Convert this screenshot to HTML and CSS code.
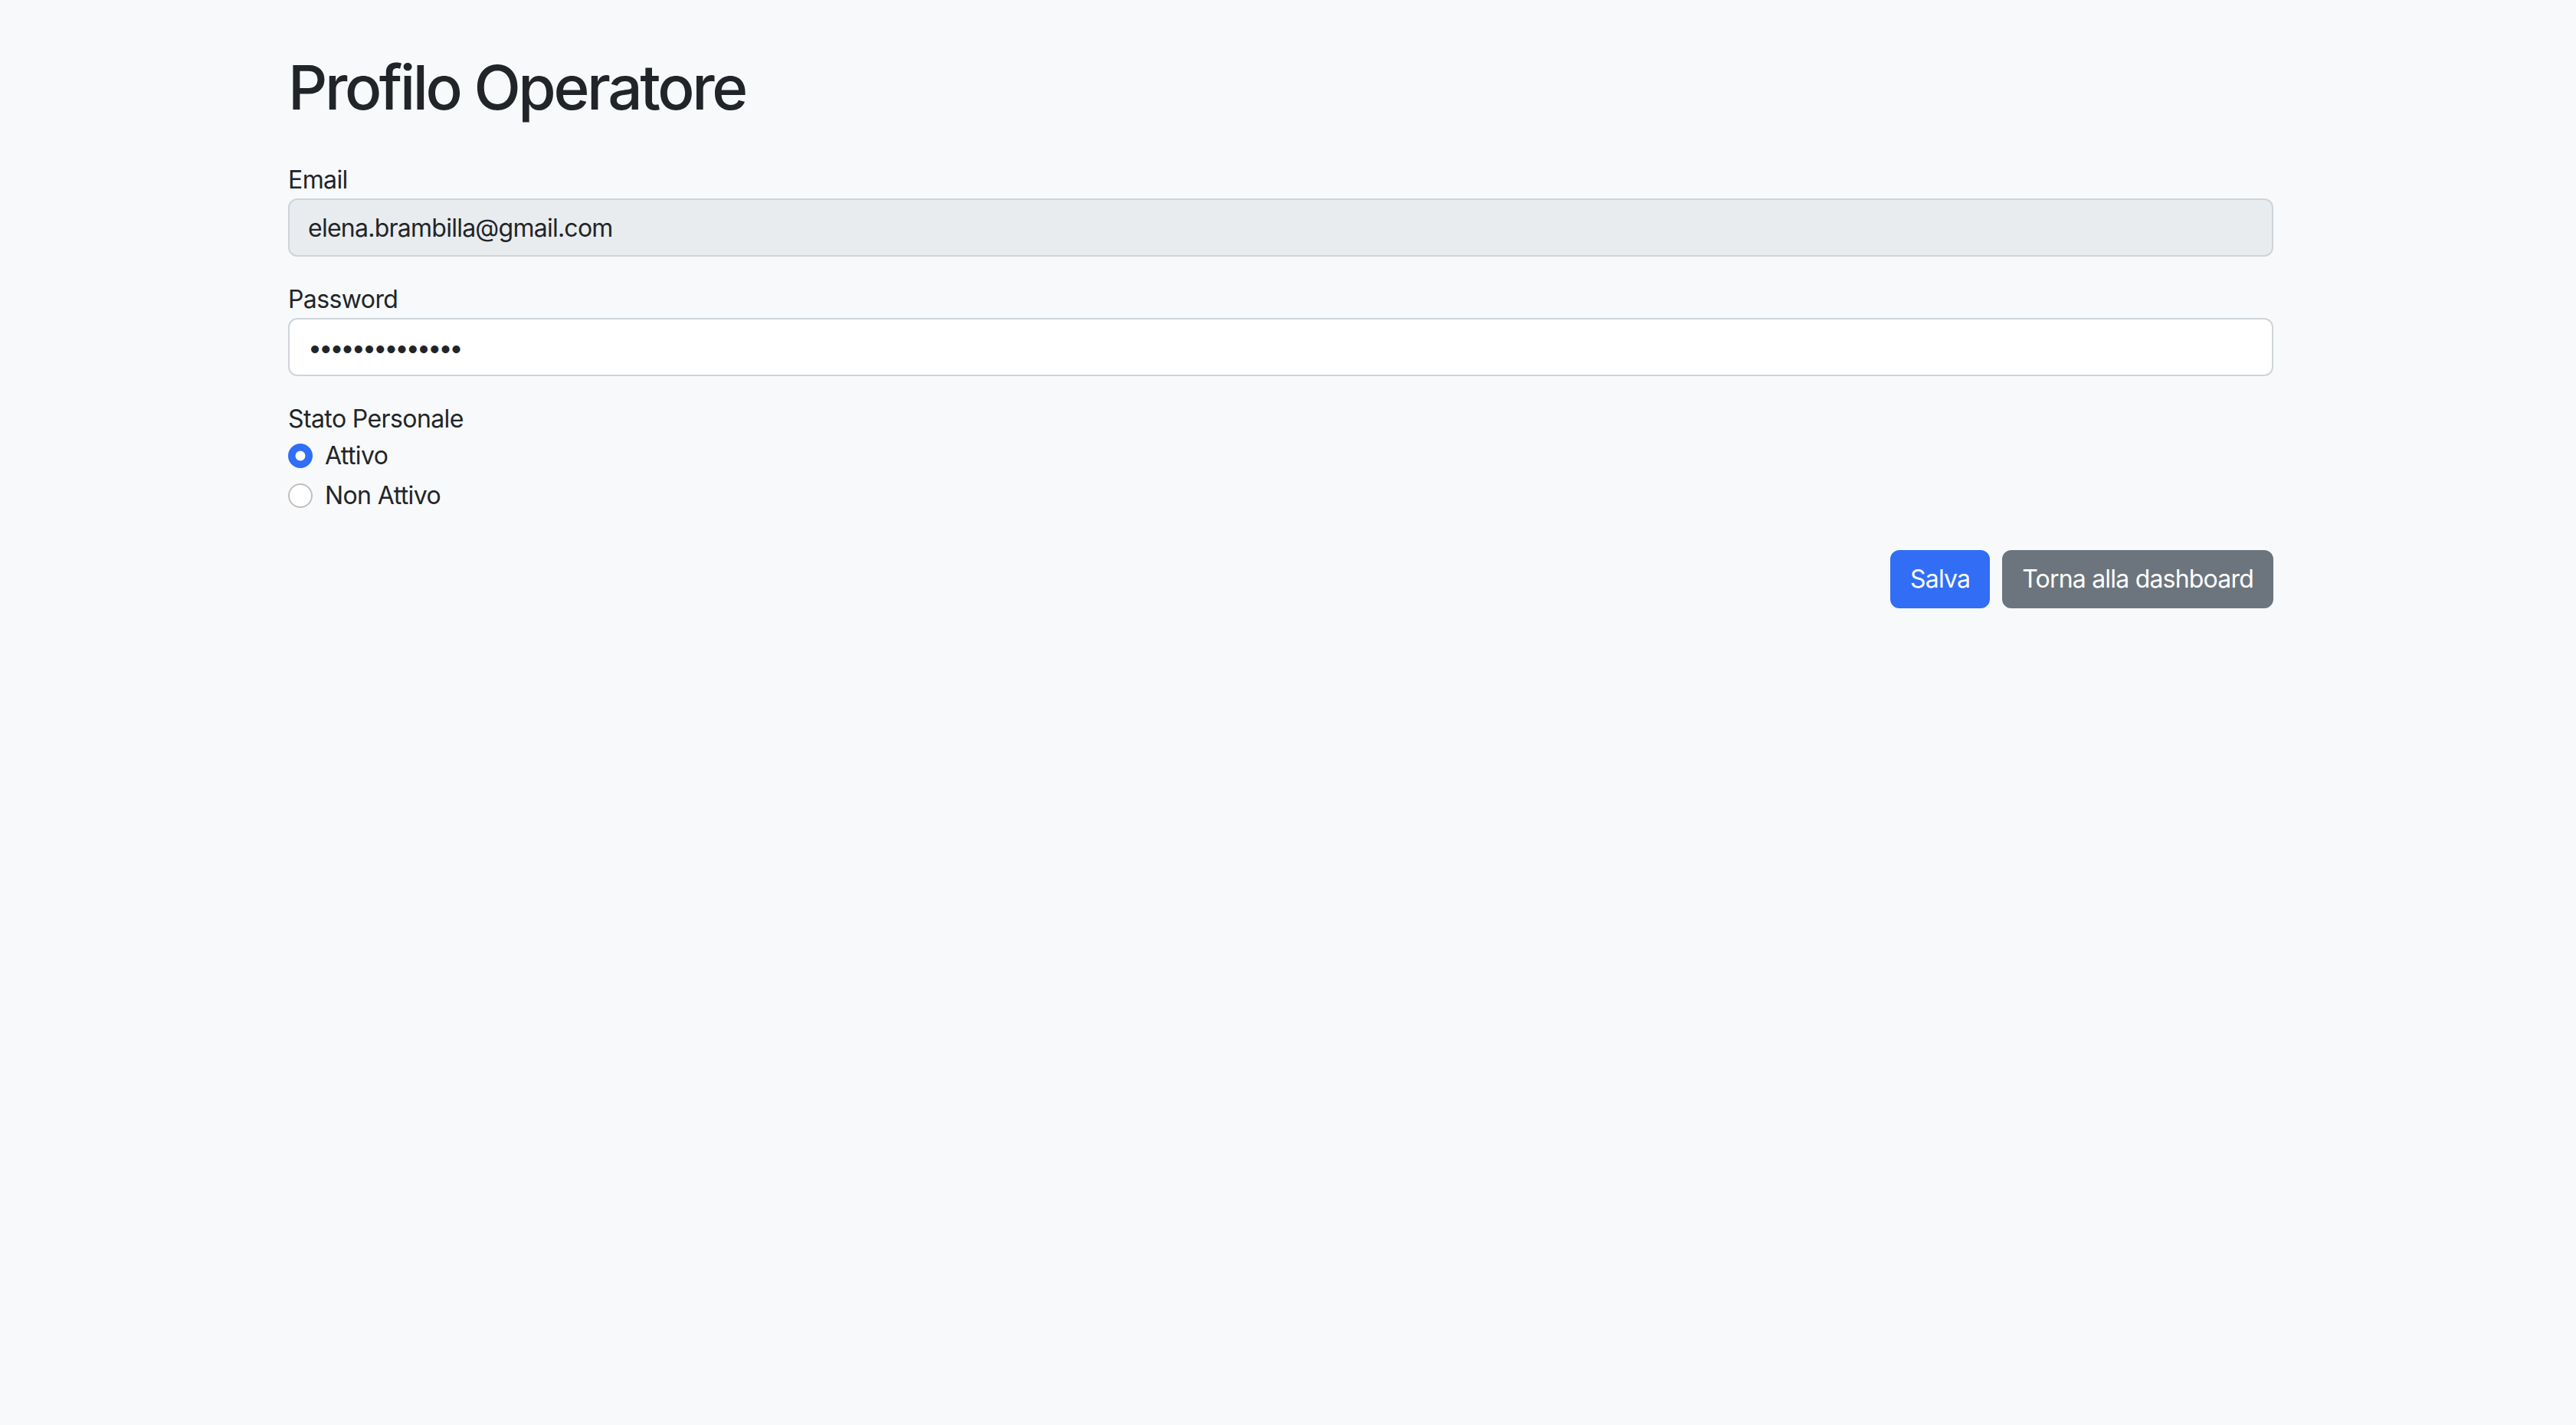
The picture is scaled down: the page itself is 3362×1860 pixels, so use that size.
FILE: index.html
```html
<!DOCTYPE html>
<html lang="it">
<head>
<meta charset="utf-8">
<title>Profilo Operatore</title>
<link rel="stylesheet" href="styles.css">
</head>
<body>
<main class="container">
  <h1 class="title">Profilo Operatore</h1>
  <form class="form">
    <div class="field">
      <label class="label" for="email">Email</label>
      <input class="control control-disabled" id="email" type="email" value="elena.brambilla@gmail.com" disabled>
    </div>
    <div class="field">
      <label class="label" for="password">Password</label>
      <input class="control control-password" id="password" type="password" value="elenabrambilla">
    </div>
    <div class="field field-radios">
      <div class="label">Stato Personale</div>
      <label class="check">
        <input class="radio" type="radio" name="stato" checked>
        <span>Attivo</span>
      </label>
      <label class="check">
        <input class="radio" type="radio" name="stato">
        <span>Non Attivo</span>
      </label>
    </div>
    <div class="actions">
      <button type="button" class="btn btn-primary">Salva</button>
      <button type="button" class="btn btn-secondary">Torna alla dashboard</button>
    </div>
  </form>
</main>
</body>
</html>
```
FILE: styles.css
```css
html, body {
  margin: 0;
  padding: 0;
}

body {
  background: #f8f9fa;
  color: #212529;
  font-family: Inter, "Noto Sans", "Liberation Sans", sans-serif;
  font-size: 32px;
  line-height: 48px;
  letter-spacing: -0.6px;
  min-height: 1860px;
}

.container {
  width: 2591px;
  margin-left: 376px;
  padding-top: 66px;
}

.title {
  margin: 0 0 49px 0;
  font-size: 80px;
  line-height: 96px;
  font-weight: 500;
  letter-spacing: -3.4px;
}

.form {
  display: flex;
  flex-direction: column;
}

.field {
  display: flex;
  flex-direction: column;
  margin-bottom: 32px;
}

.field-radios {
  margin-bottom: 0;
}

.label {
  display: block;
  font-size: 32px;
  line-height: 48px;
}

.control {
  box-sizing: border-box;
  width: 100%;
  height: 76px;
  padding: 12px 24px;
  border: 2px solid #ced4da;
  border-radius: 12px;
  background: #ffffff;
  color: #212529;
  font-family: inherit;
  font-size: 32px;
  line-height: 48px;
  letter-spacing: -0.75px;
  outline: none;
  margin: 0;
}

.control-password {
  letter-spacing: -3.8px;
}

.control-disabled {
  background: #e9ecef;
  opacity: 1;
  -webkit-text-fill-color: #212529;
}

.check {
  display: flex;
  align-items: flex-start;
  gap: 16px;
  min-height: 48px;
  margin-bottom: 4px;
}

.check:last-child {
  margin-bottom: 0;
}

.radio {
  appearance: none;
  -webkit-appearance: none;
  box-sizing: border-box;
  width: 32px;
  height: 32px;
  margin: 8px 0 0 0;
  border: 2px solid #bfbfbf;
  border-radius: 50%;
  background: #ffffff;
  flex: none;
}

.radio:checked {
  border-color: #316ef5;
  background: radial-gradient(circle, #ffffff 0 6px, #316ef5 6.8px);
}

.actions {
  display: flex;
  justify-content: flex-end;
  gap: 16px;
  margin-top: 47px;
}

.btn {
  box-sizing: border-box;
  height: 76px;
  padding: 12px 24px;
  border: 2px solid transparent;
  border-radius: 12px;
  font-family: inherit;
  font-size: 32px;
  line-height: 48px;
  letter-spacing: -0.8px;
  color: #ffffff;
  cursor: pointer;
}

.btn-primary {
  background: #316ef5;
  border-color: #316ef5;
}

.btn-secondary {
  background: #6c757d;
  border-color: #6c757d;
}
```
